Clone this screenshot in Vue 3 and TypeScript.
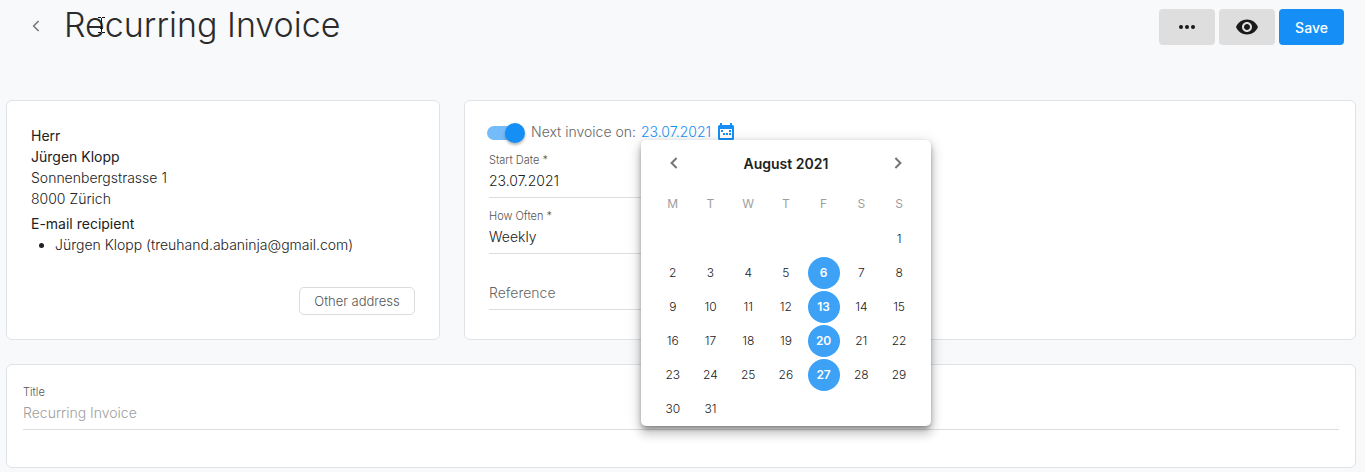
<script setup lang="ts">
import { ref } from 'vue'

const weekdays: string[] = ['M', 'T', 'W', 'T', 'F', 'S', 'S']
const leadingBlanks = 6
const daysInMonth = 31
const invoiceDays: number[] = [6, 13, 20, 27]

const cells: (number | null)[] = [
  ...Array<null>(leadingBlanks).fill(null),
  ...Array.from({ length: daysInMonth }, (_, i) => i + 1),
]
while (cells.length % 7 !== 0) cells.push(null)

const weeks: (number | null)[][] = []
for (let i = 0; i < cells.length; i += 7) weeks.push(cells.slice(i, i + 7))

const active = ref(true)
const startDate = ref('23.07.2021')
const frequency = ref('Weekly')
const reference = ref('')
const title = ref('')
</script>

<template>
  <div class="page">
    <header class="header">
      <button class="back" type="button" aria-label="Back">
        <svg width="8" height="12" viewBox="0 0 8 12"><path d="M6.6 1 1.6 6l5 5" /></svg>
      </button>
      <h1>
        Recurring Invoice
        <svg class="caret" width="7" height="16" viewBox="0 0 7 16">
          <path d="M0 .5h3M4 .5h3M3.5 1v14M0 15.5h3M4 15.5h3M2 11.5h3" />
        </svg>
      </h1>
      <div class="actions">
        <button class="btn" type="button" aria-label="More">
          <svg width="18" height="6" viewBox="0 0 18 6">
            <circle cx="3" cy="3" r="2" /><circle cx="9" cy="3" r="2" /><circle cx="15" cy="3" r="2" />
          </svg>
        </button>
        <button class="btn" type="button" aria-label="Preview">
          <svg width="24" height="24" viewBox="0 0 24 24">
            <path d="M12 4.5C7 4.5 2.73 7.61 1 12c1.73 4.39 6 7.5 11 7.5s9.27-3.11 11-7.5c-1.73-4.39-6-7.5-11-7.5zM12 17c-2.76 0-5-2.24-5-5s2.24-5 5-5 5 2.24 5 5-2.24 5-5 5zm0-8c-1.66 0-3 1.34-3 3s1.34 3 3 3 3-1.34 3-3-1.34-3-3-3z" />
          </svg>
        </button>
        <button class="btn primary" type="button">Save</button>
      </div>
    </header>

    <main>
      <div class="columns">
        <section class="card address">
          <div class="strong">Herr</div>
          <div class="strong">Jürgen Klopp</div>
          <div>Sonnenbergstrasse 1</div>
          <div>8000 Zürich</div>
          <div class="strong recipient">E-mail recipient</div>
          <ul>
            <li>Jürgen Klopp (treuhand.abaninja@gmail.com)</li>
          </ul>
          <button class="other" type="button">Other address</button>
        </section>

        <section class="card schedule">
          <div class="next">
            <label class="toggle">
              <input v-model="active" type="checkbox" aria-label="Recurring invoice active" />
              <span class="knob"></span>
            </label>
            <span class="next-label">Next invoice on:</span>
            <div class="anchor">
              <button class="date" type="button">
                23.07.2021
                <svg width="16" height="18" viewBox="0 0 16 18">
                  <path fill-rule="evenodd" d="M2 0h2v2h8V0h2v2h.5Q16 2 16 3.500v12Q16 17 14.500 17h-13Q0 17 0 15.500v-12Q0 2 1.500 2H2zM2 6v9h12V6z" />
                  <path d="M3 7h2v2H3zM11 7h2v2h-2zM5 10h2v2H5zM8 10h2v2H8zM11 10h2v2h-2z" />
                </svg>
              </button>
              <div class="popup" role="dialog" aria-label="August 2021">
                <div class="month">
                  <button type="button" aria-label="Previous month">
                    <svg width="8" height="12" viewBox="0 0 8 12"><path d="M6.600 1 1.600 6l5 5" /></svg>
                  </button>
                  <strong>August 2021</strong>
                  <button type="button" aria-label="Next month">
                    <svg width="8" height="12" viewBox="0 0 8 12"><path d="m1.400 1 5 5-5 5" /></svg>
                  </button>
                </div>
                <table>
                  <thead>
                    <tr><th v-for="(d, i) in weekdays" :key="i">{{ d }}</th></tr>
                  </thead>
                  <tbody>
                    <tr v-for="(week, w) in weeks" :key="w">
                      <td v-for="(day, i) in week" :key="i">
                        <button
                          v-if="day"
                          type="button"
                          class="day"
                          :class="{ marked: invoiceDays.includes(day) }"
                        >{{ day }}</button>
                      </td>
                    </tr>
                  </tbody>
                </table>
              </div>
            </div>
          </div>
          <div class="fields">
            <div class="field">
              <label for="start">Start Date *</label>
              <input id="start" v-model="startDate" type="text" />
            </div>
            <div class="field">
              <label for="often">How Often *</label>
              <select id="often" v-model="frequency">
                <option>Weekly</option>
                <option>Monthly</option>
              </select>
            </div>
            <div class="field">
              <input v-model="reference" type="text" aria-label="Reference" placeholder="Reference" />
            </div>
          </div>
        </section>
      </div>

      <section class="card heading">
        <div class="field">
          <label for="title">Title</label>
          <input id="title" v-model="title" class="pale" type="text" placeholder="Recurring Invoice" />
        </div>
      </section>
    </main>
  </div>
</template>

<style>
body {
  background: #f8f9fb;
}
</style>

<style scoped>
.page {
  padding: 0 9px 4px 6px;
  font: 300 14px/21px Inter, sans-serif;
  color: #212121;
}

button,
input,
select {
  font: inherit;
  color: inherit;
  margin: 0;
  padding: 0;
  border: 0;
  background: none;
}

button {
  cursor: pointer;
}

.header {
  display: flex;
  align-items: flex-start;
  height: 100px;
  padding: 0 12px 0 20px;
}

.back {
  display: flex;
  align-items: center;
  justify-content: center;
  width: 20px;
  height: 52px;
}

.back svg,
.month svg {
  fill: none;
  stroke: #757575;
  stroke-width: 2;
}

.back svg {
  stroke-width: 1.500;
}

h1 {
  position: relative;
  margin: 0 0 0 18px;
  font-size: 34px;
  line-height: 50px;
  font-weight: 300;
  color: #2b2b2b;
}

.caret {
  position: absolute;
  left: 34px;
  top: 17px;
  fill: none;
  stroke: #111;
}

.actions {
  display: flex;
  gap: 4px;
  margin: 9px 0 0 auto;
}

.btn {
  display: flex;
  align-items: center;
  justify-content: center;
  width: 56px;
  height: 36px;
  border-radius: 4px;
  background: #dedede;
  fill: #1a1a1a;
}

.primary {
  width: 65px;
  background: #158ff5;
  color: #fff;
  font-weight: 500;
}

.columns {
  display: grid;
  grid-template-columns: 434fr 892fr;
  gap: 24px;
  margin-bottom: 24px;
}

.card {
  border: 1px solid #dfe2e6;
  border-radius: 6px;
  background: #fff;
}

.address {
  display: flex;
  flex-direction: column;
  padding: 24px;
}

.strong {
  font-weight: 400;
}

.recipient {
  margin-top: 4px;
}

ul {
  margin: 0;
  padding-left: 24px;
}

.other {
  align-self: flex-end;
  width: 116px;
  height: 28px;
  margin-top: 32px;
  border: 1px solid #dcdcdc;
  border-radius: 5px;
  font-size: 13px;
  color: #555;
}

.schedule {
  padding: 20px 22px;
}

.next {
  display: flex;
  align-items: flex-start;
  height: 22px;
}

.toggle {
  position: relative;
  align-self: flex-end;
  display: flex;
  align-items: center;
  width: 38px;
  height: 20px;
  margin-right: 6px;
}

.toggle input {
  appearance: none;
  width: 36px;
  height: 14px;
  border-radius: 7px;
  background: #bdbdbd;
}

.toggle input:checked {
  background: #73bcf9;
}

.knob {
  position: absolute;
  right: 0;
  top: 0;
  width: 20px;
  height: 20px;
  border-radius: 50%;
  background: #158ff5;
  box-shadow: 0 2px 3px rgba(0, 0, 0, 0.3);
  pointer-events: none;
}

.next-label {
  color: #666;
  margin-right: 5px;
}

.anchor {
  position: relative;
}

.date {
  display: flex;
  align-items: center;
  gap: 7px;
  color: #158ff5;
  fill: #158ff5;
}

.popup {
  position: absolute;
  z-index: 2;
  top: 19px;
  left: 0;
  width: 290px;
  box-sizing: border-box;
  padding: 0 13px;
  border-radius: 5px;
  background: #fff;
  box-shadow: 0 5px 5px -3px rgba(0, 0, 0, 0.2), 0 8px 10px 1px rgba(0, 0, 0, 0.14), 0 3px 14px 2px rgba(0, 0, 0, 0.12), 0 2px 5px rgba(0, 0, 0, 0.2);
}

.month {
  display: flex;
  align-items: center;
  justify-content: space-between;
  height: 46px;
}

.month strong {
  font-weight: 600;
}

.month button {
  display: flex;
  align-items: center;
  justify-content: center;
  width: 40px;
  height: 44px;
}

table {
  width: 100%;
  table-layout: fixed;
  border-collapse: collapse;
  text-align: center;
}

th,
td {
  box-sizing: border-box;
  height: 34px;
  padding: 0;
  font-size: 12px;
}

th {
  height: 36px;
  padding-bottom: 2px;
  font-weight: 400;
  color: #9e9e9e;
}

.day {
  width: 32px;
  height: 32px;
  line-height: 32px;
  border-radius: 50%;
  vertical-align: middle;
}

.marked {
  background: #3da2f5;
  color: #fff;
  font-weight: 600;
}

.fields {
  display: flex;
  flex-direction: column;
  gap: 1px;
  width: 46%;
  padding-left: 2px;
}

.field {
  display: flex;
  flex-direction: column;
  justify-content: flex-end;
  box-sizing: border-box;
  height: 55px;
  padding-bottom: 6px;
  border-bottom: 1px solid #dedede;
}

.field label {
  margin-bottom: 1px;
  font-size: 11px;
  line-height: 16px;
  color: #555;
}

.field input,
.field select {
  appearance: none;
  width: 100%;
  height: 22px;
  outline: 0;
}

.field input::placeholder {
  color: #666;
  opacity: 1;
}

.field .pale::placeholder {
  color: #9e9e9e;
}

.heading {
  padding: 10px 16px 37px;
}
</style>
